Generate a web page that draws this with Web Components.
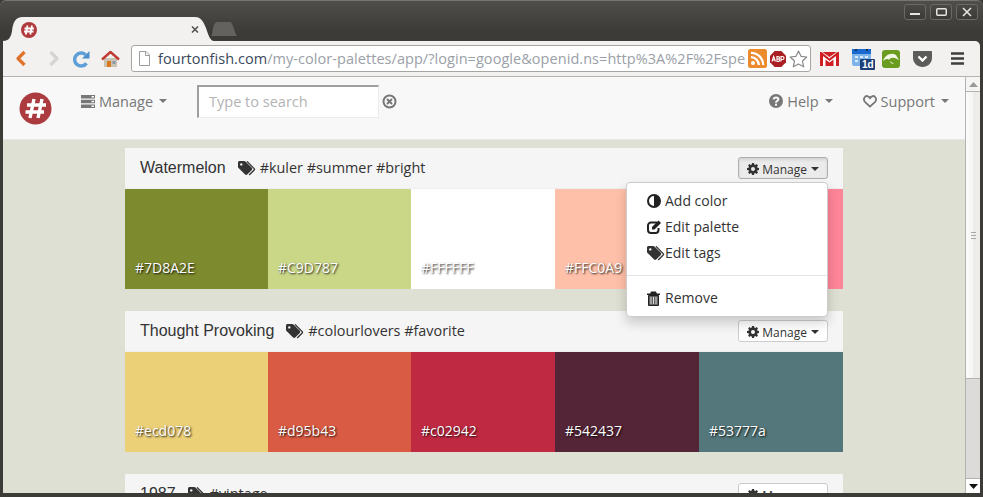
<!DOCTYPE html>
<html>
<head>
<meta charset="utf-8">
<title>My Color Palettes</title>
<style>
  html, body { margin: 0; height: 100%; background: #3c3b37; overflow: hidden; }
</style>
</head>
<body>
<browser-window>
  <app-navbar></app-navbar>
  <palette-card name="Watermelon" tags="#kuler #summer #bright" colors="#7D8A2E,#C9D787,#FFFFFF,#FFC0A9,#FF8598" open></palette-card>
  <palette-card name="Thought Provoking" tags="#colourlovers #favorite" colors="#ecd078,#d95b43,#c02942,#542437,#53777a"></palette-card>
  <palette-card name="1987" tags="#vintage" colors="#ecd078,#d95b43,#c02942,#542437,#53777a"></palette-card>
</browser-window>

<script>
const ICONS = {
  tags: `<svg viewBox="0 0 18 15" width="18" height="15"><path fill="currentColor" d="M0 1.6C0 .7.7 0 1.6 0h4.6c.5 0 1 .2 1.3.5l6.3 6.3c.6.6.6 1.5 0 2.1l-4.6 4.6c-.6.6-1.5.6-2.1 0L.8 7.2C.3 6.9 0 6.4 0 5.9zM3.3 2.2a1.2 1.2 0 1 0 0 2.4 1.2 1.2 0 0 0 0-2.4z" fill-rule="evenodd"/><path fill="none" stroke="currentColor" stroke-width="1.3" d="M9 .4l7.2 7.2c.4.4.4 1 0 1.4l-5 5"/></svg>`,
  gear: `<svg viewBox="0 0 12 12" width="12" height="12"><path fill="currentColor" fill-rule="evenodd" d="M5 0h2l.3 1.6 1 .4L9.7 1.1 11 2.4l-.9 1.4.4 1L12 5v2l-1.5.3-.4 1 .9 1.3-1.3 1.300-1.400-.9-1 .4L7 12H5l-.3-1.600-1-.4-1.300.9-1.300-1.300.9-1.300-.4-1L0 7V5l1.600-.3.4-1-.9-1.300 1.300-1.300 1.300.9 1-.4zM6 4a2 2 0 1 0 0 4 2 2 0 0 0 0-4z"/></svg>`,
  caret: `<svg viewBox="0 0 8 4" width="8" height="4"><path fill="currentColor" d="M0 0h8L4 4z"/></svg>`
};

class BrowserWindow extends HTMLElement {
  constructor() {
    super();
    this.attachShadow({mode: "open"}).innerHTML = `
    <style>
      :host {
        display: flex;
        flex-direction: column;
        width: 983px;
        height: 497px;
        box-sizing: border-box;
        padding: 0 3px 4px 3px;
        background: linear-gradient(#4f4e4a, #3c3b37 30px);
        border-top: 1px solid #77766f;
        border-radius: 6px 6px 0 0;
        font-family: "Open Sans", sans-serif;
        overflow: hidden;
      }
      .strip { height: 40px; flex: none; display: flex; align-items: flex-end; justify-content: space-between; }
      .tabs { display: flex; align-items: flex-end; }
      .tab { width: 211px; height: 24px; display: block; }
      .newtab { width: 26px; height: 14px; margin: 0 0 5px -3px; display: block; }
      .ctl { display: flex; gap: 4px; align-self: flex-start; margin: 3px 2px 0 0; }
      .ctl span { width: 22px; height: 16px; box-sizing: border-box; border: 1px solid #6b6a64; border-radius: 3px;
        background: linear-gradient(#4a4945, #3b3a36); display: flex; align-items: center; justify-content: center; }
      .toolbar { height: 36px; flex: none; background: #f2f1f0; border-bottom: 1px solid #b5b4b2;
        border-top-right-radius: 5px; display: flex; align-items: center; box-sizing: border-box; }
      .toolbar svg { display: block; flex: none; }
      .nav { display: flex; align-items: center; padding-left: 12px; }
      .omni { width: 680px; height: 27px; margin-left: 11px; background: #fff; border: 1px solid #a7a6a3; border-radius: 3px;
        box-sizing: border-box; display: flex; align-items: center; font: 14.5px "Open Sans", sans-serif; color: #9aa0a8; overflow: hidden; }
      .omni .page { margin: 0 8px 0 7px; }
      .omni .url { flex: 1; white-space: nowrap; overflow: hidden; letter-spacing: .05px; }
      .omni b { font-weight: 400; color: #39485a; }
      .ext { display: flex; align-items: center; }
      .body { flex: 1; min-height: 0; display: flex; }
      .page-area { flex: 1; min-width: 0; background: #dde0d2; overflow: hidden; }
      .list { display: flex; flex-direction: column; gap: 22px; width: 718px; margin: 8px 0 0 122px; }
      .scroll { width: 15px; flex: none; background: #dcdbda; border-left: 1px solid #b3b2b0; box-sizing: border-box;
        display: flex; flex-direction: column; }
      .scroll .btn { height: 14px; background: #f5f5f4; border-bottom: 1px solid #b3b2b0; display: flex; align-items: center; justify-content: center; flex: none; }
      .scroll .btn.down { border-bottom: 0; border-top: 1px solid #b3b2b0; background: #fff; }
      .scroll .thumb { height: 287px; background: linear-gradient(90deg, #fbfbfa, #f4f4f3 50%, #ebebe9 55%, #ededeb);
        border-bottom: 1px solid #b3b2b0; box-sizing: border-box; flex: none;
        display: flex; align-items: center; justify-content: center; }
      .scroll .grip { width: 5px; height: 7px; background: repeating-linear-gradient(#a9a8a6 0 1px, transparent 1px 3px); }
      .scroll .rest { flex: 1; }
    </style>
    <div class="strip">
      <div class="tabs">
        <svg class="tab" viewBox="0 0 211 24">
          <path fill="#f2f1f0" d="M0 24C6 24 8 20 9 14 10 6 12 0 20 0H192C198 0 200 4 203 11 205 17 207 24 211 24z"/>
          <circle cx="26" cy="13" r="8" fill="#b03a3e"/>
          <path stroke="#fff" stroke-width="1.8" fill="none" d="M24.5 8.5 22.8 17.5M29 8.5 27.3 17.5M21.5 11.5H31M21 14.5H30.5"/>
          <path stroke="#55534f" stroke-width="1.6" fill="none" d="M189 9.5 195 15.5M195 9.5 189 15.5"/>
        </svg>
        <svg class="newtab" viewBox="0 0 26 14"><path fill="#63625e" d="M0 14C2 14 1 1 6 0H19C22 0 24 12 26 14z"/></svg>
      </div>
      <div class="ctl">
        <span><svg width="10" height="10"><path fill="#e6e5e2" d="M0 6h10v2H0z"/></svg></span>
        <span><svg width="11" height="10"><rect x=".75" y="1.75" width="9.5" height="6.5" rx="1" fill="none" stroke="#e6e5e2" stroke-width="1.5"/></svg></span>
        <span><svg width="10" height="10"><path stroke="#e6e5e2" stroke-width="1.6" d="M1 1l8 8M9 1l-8 8"/></svg></span>
      </div>
    </div>
    <div class="toolbar">
      <div class="nav">
        <svg width="12" height="17" viewBox="0 0 12 17"><path fill="none" stroke="#e0712c" stroke-width="3.2" stroke-linejoin="round" d="M9.5 2 3 8.5 9.5 15"/></svg>
        <svg style="margin-left:21px" width="12" height="17" viewBox="0 0 12 17"><path fill="none" stroke="#d5d4d2" stroke-width="3.2" stroke-linejoin="round" d="M2.5 2 9 8.5 2.5 15"/></svg>
        <svg style="margin-left:12px" width="18" height="18" viewBox="0 0 18 18"><path fill="none" stroke="#5f9fd8" stroke-width="3.4" d="M14.5 13.2A6.5 6.5 0 1 1 13.6 4.8"/><path fill="#4d8fcb" d="M17.5 1v7.5H10z"/></svg>
        <svg style="margin-left:11px" width="19" height="18" viewBox="0 0 19 18"><path fill="#c9c3b4" d="M3 8h13v9H3z"/><path fill="#d97a1e" d="M6 11h4v6H6z"/><rect x="11.5" y="11" width="3" height="3" fill="#8b98a5"/><path fill="none" stroke="#bf3a32" stroke-width="2.4" stroke-linejoin="round" d="M1 9.5 9.5 2 18 9.5"/></svg>
      </div>
      <div class="omni">
        <svg class="page" width="11" height="15" viewBox="0 0 11 15"><path fill="#fff" stroke="#9c9c9a" d="M.5.5h6.500l3.500 3.500v10.500H.5z"/><path fill="none" stroke="#9c9c9a" d="M6.500.5v4h4"/></svg>
        <span class="url"><b>fourtonfish.com</b>/my-color-palettes/app/?login=google&amp;openid.ns=http%3A%2F%2Fspe</span>
        <svg width="19" height="19" viewBox="0 0 19 19"><rect width="19" height="19" rx="2.5" fill="#ec8a2e"/><circle cx="5" cy="14" r="2" fill="#fff"/><path fill="none" stroke="#fff" stroke-width="2.3" d="M3 8.2a8 8 0 0 1 7.8 7.8M3 3.8a12.300 12.300 0 0 1 12.200 12.200"/></svg>
        <svg style="margin-left:3px" width="16" height="16" viewBox="0 0 16 16"><path fill="#a91e22" d="M4.7 0h6.600L16 4.700v6.600L11.300 16H4.700L0 11.300V4.700z"/><path stroke="#fff" stroke-width="1.2" fill="none" d="M2 10.500 3.700 5.500 5.400 10.500M2.600 9H4.800M7 5.500v5h1.300a1.250 1.250 0 0 0 0-2.500H7h1.200a1.200 1.200 0 0 0 0-2.500zM11 10.500v-5h1.500a1.500 1.500 0 0 1 0 3H11"/></svg>
        <svg style="margin:0 2px 0 3px" width="19" height="18" viewBox="0 0 18 18"><path fill="#fff" stroke="#8b8a88" stroke-width="1.2" stroke-linejoin="round" d="M9 1l2.500 5.300 5.800.7-4.300 4 1.200 5.800L9 14l-5.200 2.800L5 11 .7 7l5.800-.7z"/></svg>
      </div>
      <div class="ext">
        <svg style="margin-left:9px" width="19" height="14" viewBox="0 0 19 14"><path fill="#cf1f25" d="M0 0h19v14H0z"/><path fill="#fff" d="M3 14V4l6.500 5L16 4v10h-2.500V7.500l-4 3-4-3V14z"/><path fill="#f6f4f0" d="M1.500 0h1L9.500 5 16.500 0h1L9.500 6.500z"/></svg>
        <svg style="margin-left:12px" width="24" height="24" viewBox="0 0 24 24"><rect x="1" y="2" width="19" height="17" rx="2" fill="#7fb4ea"/><rect x="1" y="2" width="19" height="5" fill="#1769d0"/><circle cx="5" cy="3" r="1" fill="#222"/><circle cx="16" cy="3" r="1" fill="#222"/><path fill="#fff" opacity=".7" d="M4 9h3v2H4zM9 9h3v2H9zM14 9h3v2h-3zM4 13h3v2H4zM9 13h3v2H9z"/><rect x="9" y="12" width="15" height="11" rx="1" fill="#1d3f78"/><text x="11" y="21" font-family="Liberation Sans, sans-serif" font-size="10" font-weight="700" fill="#fff">1d</text></svg>
        <svg style="margin-left:7px" width="18" height="18" viewBox="0 0 18 18"><rect width="18" height="18" rx="3" fill="#6a9c1f"/><path fill="#f1f5e6" d="M1 11C3 5 9 2 14 5l3 5-3-1.500C11 7 8 8 7 10 6 8 3 9 1 11zM8 11c1 1 3 2 4 3-2 0-4-1-4-3z"/></svg>
        <svg style="margin-left:13px" width="19" height="16" viewBox="0 0 19 16"><path fill="#5c5c5a" d="M1 0h17c.6 0 1 .4 1 1v6c0 5-4.500 9-9.500 9S0 12 0 7V1c0-.6.4-1 1-1z"/><path fill="none" stroke="#fff" stroke-width="2.4" d="M5.500 5.500 9.500 9.500 13.500 5.500"/></svg>
        <svg style="margin-left:19px" width="13" height="13" viewBox="0 0 13 13"><path stroke="#3e3e3c" stroke-width="2.4" d="M0 1.500h13M0 6.500h13M0 11.500h13"/></svg>
      </div>
    </div>
    <div class="body">
      <div class="page-area">
        <slot name="nav"></slot>
        <div class="list"><slot></slot></div>
      </div>
      <div class="scroll">
        <div class="btn"><svg width="9" height="5"><path fill="#9a9a98" d="M0 5h9L4.500 0z"/></svg></div>
        <div class="thumb"><div class="grip"></div></div>
        <div class="rest"></div>
        <div class="btn down"><svg width="9" height="5"><path fill="#111" d="M0 0h9L4.500 5z"/></svg></div>
      </div>
    </div>`;
  }
  connectedCallback() {
    const nav = this.querySelector("app-navbar");
    if (nav) nav.slot = "nav";
  }
}

class NavLink extends HTMLElement {
  constructor() {
    super();
    this.attachShadow({mode: "open"}).innerHTML = `
    <style>
      :host { display: inline-flex; align-items: center; color: #777; font: 14.5px "Open Sans", sans-serif; white-space: nowrap; }
      ::slotted(svg) { margin-right: 4px; display: block; }
      .caret { margin-left: 6px; display: flex; }
    </style>
    <slot name="icon"></slot><slot></slot><span class="caret">${ICONS.caret}</span>`;
  }
}

class AppNavbar extends HTMLElement {
  constructor() {
    super();
    this.attachShadow({mode: "open"}).innerHTML = `
    <style>
      :host { display: flex; align-items: center; height: 63px; box-sizing: border-box; background: #f8f8f8;
        border-bottom: 1px solid #e7e7e7; padding: 0 16px 14px 16px; font-family: "Open Sans", sans-serif; }
      .logo { display: block; flex: none; margin-top: 14px; }
      input { width: 182px; height: 33px; box-sizing: border-box; border-style: solid; border-width: 2px 1px 1px 2px;
        border-color: #9f9f9f #ebebeb #ebebeb #9f9f9f; background: #fff; padding: 0 10px; margin: 0 0 0 30px; outline: 0;
        font: 14.5px "Open Sans", sans-serif; }
      input::placeholder { color: #b3b3b3; opacity: 1; }
      .clear { margin-left: 3px; display: block; flex: none; }
      .spacer { flex: 1; }
      nav-link.m { margin-left: 29px; }
      nav-link.s { margin-left: 30px; }
    </style>
    <svg class="logo" width="33" height="33" viewBox="0 0 33 33"><circle cx="16.5" cy="16.5" r="16" fill="#ac3b40"/><path fill="none" stroke="#fff" stroke-width="3.4" d="M15 7 11 26M23 7 19 26M8 13H27M6.5 20H25"/></svg>
    <nav-link class="m"><svg slot="icon" width="14" height="13" viewBox="0 0 14 13"><path fill="#777" fill-rule="evenodd" d="M0 0h14v3.500H0zM0 4.700h14v3.500H0zM0 9.400h14v3.500H0zM10.500 1v1.500H13V1zM10.500 5.700v1.500H13V5.700zM10.500 10.400v1.500H13v-1.500z"/></svg>Manage</nav-link>
    <input placeholder="Type to search">
    <svg class="clear" width="15" height="15" viewBox="0 0 15 15"><circle cx="7.5" cy="7.5" r="6" fill="none" stroke="#777" stroke-width="2"/><path stroke="#777" stroke-width="2" d="M5 5l5 5M10 5l-5 5"/></svg>
    <div class="spacer"></div>
    <nav-link><svg slot="icon" width="14" height="14" viewBox="0 0 14 14"><circle cx="7" cy="7" r="7" fill="#777"/><path fill="none" stroke="#f8f8f8" stroke-width="2" d="M4.6 5.4C4.8 2.8 9.4 2.8 9.4 5.3 9.4 7 7 6.9 7 8.7"/><rect x="6" y="9.7" width="2" height="2" fill="#f8f8f8"/></svg>Help</nav-link>
    <nav-link class="s"><svg slot="icon" width="14" height="13" viewBox="0 0 14 13"><path fill="none" stroke="#777" stroke-width="1.8" stroke-linejoin="round" d="M7 11.700 1.900 6.800C-.4 4.300 2 0 5 1.300 6 1.700 6.600 2.500 7 3.200 7.400 2.500 8 1.700 9 1.300 12-0 14.400 4.300 12.100 6.800z"/></svg>Support</nav-link>`;
  }
}

class ManageButton extends HTMLElement {
  constructor() {
    super();
    this.attachShadow({mode: "open"}).innerHTML = `
    <style>
      :host { display: inline-flex; align-items: center; height: 22px; box-sizing: border-box; padding: 2px 8px 0; gap: 3px;
        background: #fff; border: 1px solid #ccc; border-radius: 3px; color: #333; font: 12px "Open Sans", sans-serif; white-space: nowrap; }
      :host([active]) { background: #ebebeb; border-color: #adadad; box-shadow: inset 0 2px 3px rgba(0,0,0,.1); }
      span { display: flex; }
      .caret { margin-left: 1px; }
    </style>
    <span>${ICONS.gear}</span>Manage<span class="caret">${ICONS.caret}</span>`;
  }
}

class ColorSwatch extends HTMLElement {
  constructor() {
    super();
    this.attachShadow({mode: "open"}).innerHTML = `
    <style>
      :host { height: 100px; box-sizing: border-box; display: flex; align-items: flex-end; padding: 0 0 12px 10px;
        background: var(--c); color: #fff; font: 14px "Open Sans", sans-serif; text-shadow: 1px 1px 2px rgba(0,0,0,.9); }
    </style>
    <slot></slot>`;
  }
  connectedCallback() {
    this.style.setProperty("--c", this.textContent.trim());
  }
}

class DropMenu extends HTMLElement {
  constructor() {
    super();
    this.attachShadow({mode: "open"}).innerHTML = `
    <style>
      :host { position: absolute; right: 15px; top: 34px; width: 202px; box-sizing: border-box; padding: 5px 0; background: #fff;
        border: 1px solid #ccc; border-radius: 4px; box-shadow: 0 6px 12px rgba(0,0,0,.18); color: #333; font: 14px/26px "Open Sans", sans-serif; z-index: 5; }
      .item { display: flex; align-items: center; height: 26px; padding-left: 20px; }
      .i { width: 18px; flex: none; display: flex; align-items: center; }
      hr { height: 1px; border: 0; background: #e5e5e5; margin: 9px 0 9px; }
    </style>
    <div class="item"><span class="i"><svg width="14" height="14" viewBox="0 0 14 14"><circle cx="7" cy="7" r="6" fill="#fff" stroke="#222" stroke-width="2"/><path fill="#222" d="M7 1a6 6 0 0 1 0 12z"/></svg></span>Add color</div>
    <div class="item"><span class="i"><svg width="15" height="14" viewBox="0 0 15 14"><path fill="none" stroke="#222" stroke-width="2" d="M10 2.500H4A3 3 0 0 0 1 5.500V10a3 3 0 0 0 3 3h4.500a3 3 0 0 0 3-3V8"/><path fill="#222" d="M5 7 11.500 .5 14 3 7.500 9.500H5z"/></svg></span>Edit palette</div>
    <div class="item"><span class="i">${ICONS.tags}</span>Edit tags</div>
    <hr>
    <div class="item"><span class="i"><svg width="13" height="15" viewBox="0 0 13 15"><path fill="#222" d="M0 2.500h13v1.500H0zM4 .5h5l.8 2H3.200z"/><path fill="#5f5f5f" stroke="#222" d="M1.500 4.500h10v10h-10z"/><path stroke="#fff" stroke-width=".8" d="M4 6v7M6.500 6v7M9 6v7"/></svg></span>Remove</div>`;
  }
}

class PaletteCard extends HTMLElement {
  constructor() {
    super();
    this.attachShadow({mode: "open"}).innerHTML = `
    <style>
      :host { display: block; position: relative; background: #f5f5f5; font-family: "Open Sans", sans-serif; }
      header { height: 41px; box-sizing: border-box; display: flex; align-items: center; padding: 0 15px; color: #333; border-bottom: 1px solid #eee; }
      .name { font: 16px "Liberation Sans", sans-serif; }
      .tags { display: flex; align-items: center; gap: 4px; margin-left: 12px; font-size: 14.4px; flex: 1; }
      .tags svg { display: block; }
      .tx { margin-top: -2px; }
      .row { display: grid; grid-template-columns: 143px 143px 144px 144px 144px; }
    </style>
    <header>
      <span class="name"></span>
      <span class="tags">${ICONS.tags}<span class="tx"></span></span>
      <manage-button></manage-button>
    </header>
    <div class="row"></div>`;
  }
  connectedCallback() {
    const root = this.shadowRoot;
    root.querySelector(".name").textContent = this.getAttribute("name");
    root.querySelector(".tx").textContent = this.getAttribute("tags");
    const row = root.querySelector(".row");
    this.getAttribute("colors").split(",").forEach(c => {
      const s = document.createElement("color-swatch");
      s.textContent = c;
      row.appendChild(s);
    });
    if (this.hasAttribute("open")) {
      root.querySelector("manage-button").setAttribute("active", "");
      root.appendChild(document.createElement("drop-menu"));
    }
  }
}

customElements.define("nav-link", NavLink);
customElements.define("app-navbar", AppNavbar);
customElements.define("manage-button", ManageButton);
customElements.define("color-swatch", ColorSwatch);
customElements.define("drop-menu", DropMenu);
customElements.define("palette-card", PaletteCard);
customElements.define("browser-window", BrowserWindow);
</script>
</body>
</html>
